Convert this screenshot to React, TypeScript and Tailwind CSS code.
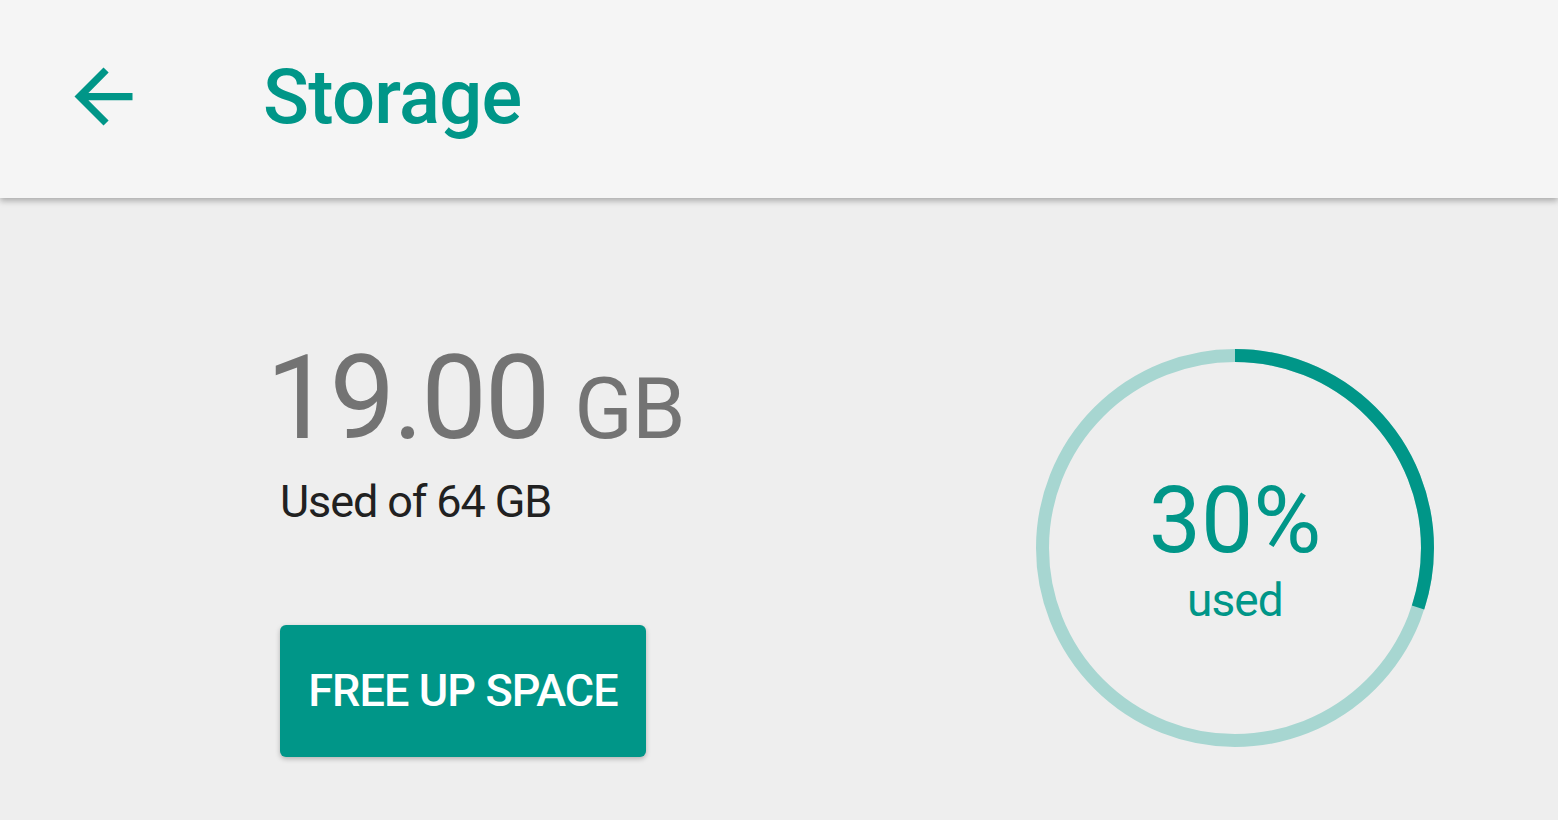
export default function App() {
  const r = 192.5;
  const circ = 2 * Math.PI * r;
  const used = 0.3;

  return (
    <div
      className="w-[1558px] h-[820px] overflow-hidden bg-[#eeeeee]"
      style={{ fontFamily: "Roboto, 'Noto Sans', sans-serif" }}
    >
      <header className="relative z-10 h-[198px] bg-[#f5f5f5] flex items-center shadow-[0_3px_6px_rgba(0,0,0,0.28)]">
        <button className="ml-[60px] -mt-[6px] w-[87px] h-[87px] text-[#009688]" aria-label="Back">
          <svg viewBox="0 0 24 24" width="87" height="87" fill="currentColor">
            <path d="M20 11H7.83l5.59-5.59L12 4l-8 8 8 8 1.41-1.41L7.83 13H20v-2z" />
          </svg>
        </button>
        <h1 className="ml-[116px] text-[76px] leading-none font-medium tracking-[-0.01em] text-[#009688] -mt-[4px]">
          Storage
        </h1>
      </header>

      <main className="flex pl-[280px]">
        <div className="w-[755px] flex flex-col items-start pt-[142px]">
          <div className="flex items-baseline -ml-[14px] text-[#737373] leading-none">
            <span className="text-[117px] tracking-[-0.02em]">19.00</span>
            <span className="text-[86px] ml-[26px] tracking-[-0.01em]">GB</span>
          </div>
          <p className="mt-[22px] text-[45px] leading-none tracking-[-0.025em] text-[#212121]">Used of 64 GB</p>
          <button className="mt-[101px] w-[366px] h-[132px] rounded-[6px] bg-[#009688] text-white text-[45px] font-medium tracking-[-0.02em] shadow-[0_2px_5px_rgba(0,0,0,0.25)]">
            FREE UP SPACE
          </button>
        </div>

        <div className="relative mt-[150px] w-[400px] h-[400px] flex flex-col items-center justify-center text-[#009688]">
          <svg className="absolute inset-0" viewBox="0 0 400 400" width="400" height="400">
            <circle cx="200" cy="200" r={r} fill="none" stroke="#a7d6d1" strokeWidth="13" />
            <circle
              cx="200"
              cy="200"
              r={r}
              fill="none"
              stroke="#009688"
              strokeWidth="13"
              strokeDasharray={`${circ * used} ${circ}`}
              transform="rotate(-90 200 200)"
            />
          </svg>
          <span className="text-[93px] leading-none">30%</span>
          <span className="mt-[10px] text-[46px] leading-none tracking-[-0.02em]">used</span>
        </div>
      </main>
    </div>
  );
}
